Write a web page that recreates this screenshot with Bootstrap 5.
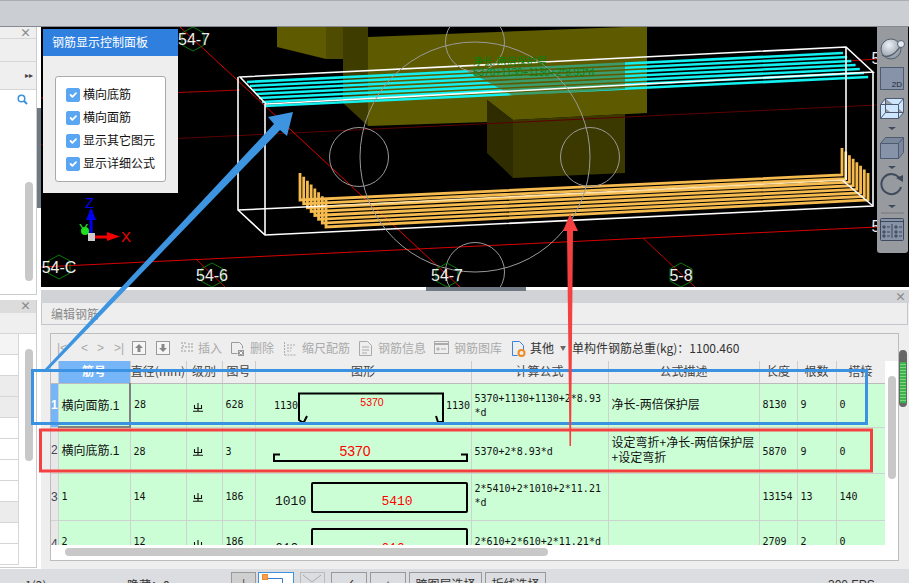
<!DOCTYPE html>
<html lang="zh">
<head>
<meta charset="UTF-8" />
<title>编辑钢筋</title>
<link href="https://cdn.jsdelivr.net/npm/bootstrap@5.3.0/dist/css/bootstrap.min.css" rel="stylesheet" />
<style>
  html, body { margin: 0; height: 583px; overflow: hidden; background: #fff; }
  body { font-family: "Noto Sans CJK SC", "Liberation Sans", sans-serif; font-size: 12px; line-height: 1.2; color: #222; }
  .app { width: 909px; height: 583px; position: relative; overflow: hidden; }
  .top-strip { height: 27px; background: #cbced3; border-top: 1px solid #aaadb2; border-bottom: 1px solid #85888c; }
  .main-area { height: 542px; }
  .side-col { width: 41px; background: #fff; flex: none; }
  .side-top { height: 268px; }
  .side-panel { width: 37px; border-right: 1px solid #ccc; border-bottom: 1px solid #ccc; background: #fff; position: relative; }
  .close-x { color: #888; font-size: 11px; line-height: 11px; font-weight: 700; text-align: right; padding-right: 5px; height: 11px; background: #efefef; }
  .side-row { background: #efefef; border-top: 1px solid #d6d6d6; color: #444; font-size: 8px; text-align: right; padding-right: 3px; }
  .side-row-search { background: #fff; padding-right: 8px; }
  .side-scroll { position: absolute; left: 25px; width: 8px; border-radius: 4px; background: #c8c8c8; }
  .side-split { width: 4px; }
  .side-split-band { margin-top: 81px; height: 100px; background: #6f7a85; }
  .side-low { height: 268px; margin-top: 5px; width: 37px; border-right: 1px solid #ccc; border-bottom: 1px solid #ccc; position: relative; overflow: hidden; }
  .side-low .close-x { height: 13px; background: #dcdcdc; }
  .low-sub { height: 21px; background: #efefef; border-bottom: 1px solid #d6d6d6; }
  .low-row { width: 19px; height: 21px; border-right: 1px solid #d6d6d6; border-bottom: 1px solid #d6d6d6; background: #fff; }
  .low-row-alt { background: #ececec; }
  .view-3d { height: 260px; background: #000; position: relative; overflow: hidden; }
  .view-3d > svg { display: block; }
  .ctrl-panel { position: absolute; left: 2px; top: 2px; width: 135px; height: 164px; background: #eee; }
  .ctrl-head { height: 27px; background: #2f80de; color: #fff; padding: 6px 9px; font-size: 12px; }
  .ctrl-box { margin: 20px 12px 0; height: 106px; background: #fff; border: 1px solid #aaa; border-radius: 3px; padding: 6px 10px; }
  .ctrl-item { height: 23px; gap: 3px; color: #111; }
  .ctrl-item .form-check-input { width: 14px; height: 14px; margin: 0; background-color: #5aa6f2; border-color: #5aa6f2; border-radius: 2px; flex: none; }
  .view-tools { position: absolute; right: 1px; top: 0; width: 31px; height: 226px; background: #979ba0; border-radius: 0 0 3px 3px; }
  .split-bar { height: 16px; position: relative; background: linear-gradient(#fff 0 3px, #d1d3d7 3px); }
  .split-bar .close-x { position: absolute; right: 3px; top: 4px; background: none; height: 11px; padding: 0; }
  .split-handle { position: absolute; left: 385px; top: 0; width: 100px; height: 4px; background: #6f7a85; }
  .edit-panel { height: 266px; background: #eee; padding-right: 1px; }
  .edit-title { height: 22px; border: 1px solid #c4c5cc; border-top: 0; padding: 4px 9px; color: #8a8a8a; }
  .edit-body { padding: 8px 0 0 9px; height: 244px; }
  .grid-box { width: 849px; height: 228px; border: 1px solid #bdbdbd; background: #fff; flex: none; }
  .grid-tools { height: 27px; background: #eee; padding-left: 6px; color: #aaa; white-space: nowrap; position: relative; }
  .grid-tools span, .grid-tools svg { position: absolute; top: 7px; }
  .grid-tools .on { color: #333; }
  .grid-main { height: 184px; }
  .grid-scroll { width: 834px; height: 184px; overflow: hidden; background: #eee; flex: none; }
  .rebar-grid { table-layout: fixed; width: 834px; margin: 0; }
  .table.rebar-grid > * > tr > * { padding: 2px 3px; background: #ccfed6; box-shadow: none; border: 0; border-right: 1px solid #cfd3cf; border-bottom: 1px solid #cfd3cf; vertical-align: top; color: #111; font-family: "DejaVu Sans Mono", "Noto Sans CJK SC", monospace; font-size: 10px; line-height: 14px; overflow: visible; word-break: break-all; }
  .table.rebar-grid > thead > tr > th { background: #eee; border-right-color: #ccc; border-bottom-color: #bbb; color: #444; height: 22px; text-align: center; font-family: "Noto Sans CJK SC", sans-serif; font-size: 12px; font-weight: 400; padding: 3px 0 0; white-space: nowrap; overflow: hidden; }
  .table.rebar-grid > thead > tr > th.col-sel { background: #76b5f7; color: #fff; font-weight: 700; }
  .table.rebar-grid > tbody > tr > td.num-cell { background: #e8e8e8; padding: 0; text-align: center; color: #445; font-family: "Liberation Sans", sans-serif; font-size: 12px; vertical-align: middle; }
  .table.rebar-grid > tbody > tr > td.num-sel { background: #76b5f7; color: #fff; font-weight: 700; }
  .table.rebar-grid > tbody > tr > td.name-cell { font-family: "Liberation Sans", "Noto Sans CJK SC", sans-serif; font-size: 12px; padding-top: 15px; }
  .table.rebar-grid > tbody > tr > td.name-low { padding-top: 16px; }
  .table.rebar-grid > tbody > tr > td.cur-cell { border-right: 2px solid #808080; border-bottom: 2px solid #808080; }
  .table.rebar-grid > tbody > tr > td.cn-cell { font-family: "Noto Sans CJK SC", sans-serif; font-size: 12px; line-height: 15px; padding-top: 6px; }
  .table.rebar-grid > tbody > tr > td.cn-one { padding-top: 12px; }
  .table.rebar-grid > tbody > tr > td.shape-cell { padding: 0; }
  .table.rebar-grid > tbody > tr > td.pad8 { padding-top: 8px; }
  .table.rebar-grid > tbody > tr > td.pad14 { padding-top: 14px; }
  .table.rebar-grid > tbody > tr > td.pad16 { padding-top: 16px; }
  .table.rebar-grid > tbody > tr > td.pad17 { padding-top: 17px; }
  .table.rebar-grid > tbody > tr > td.steel-cell { padding: 19px 0 0 6px; }
  .steel-ico { display: block; }
  .shape-cell svg { display: block; }
  .row-h1 { height: 44px; } .row-h2 { height: 46px; } .row-h3 { height: 47px; } .row-h4 { height: 47px; }
  .v-track { flex: 1; background: #fff; padding: 15px 0 0 3px; }
  .v-thumb { width: 8px; height: 103px; border-radius: 4px; background: #c8c8c8; }
  .h-track { height: 15px; background: #fff; padding: 3px 0 0 14px; }
  .h-thumb { width: 483px; height: 8px; border-radius: 4px; background: #c8c8c8; }
  .green-scroll { width: 8px; height: 57px; margin: 17px 0 0 0; border-radius: 4px; flex: none; background: repeating-linear-gradient(#3bb54a 0 2px, #7fd48a 2px 3px); border: 1px solid #666; border-top: 12px solid #666; border-bottom: 4px solid #666; }
  .status-bar { height: 14px; background: #dcdde0; overflow: hidden; position: relative; color: #333; }
  .status-bar span, .status-bar i { position: absolute; }
  .status-bar span { top: 9px; }
  .status-bar i { top: 3px; height: 22px; border: 1px solid #999; background: #dcdde0; font-style: normal; text-align: center; line-height: 16px; padding-top: 3px; }
  .status-bar i.on-btn { background: #fff; border-color: #3a92e0; padding: 0; }
  .status-bar i.dim-btn { border-color: #bbb; padding: 0; }
  .status-bar i.dark-btn { background: #cfcfcf; }
  .overlay-marks { position: absolute; left: 0; top: 0; pointer-events: none; }
</style>
</head>
<body>
<div class="app">
  <div class="top-strip"></div>
  <div class="d-flex main-area">
    <div class="side-col d-flex flex-column">
      <div class="d-flex side-top">
        <div class="side-panel">
          <div class="close-x">×</div>
          <div class="side-row" style="height:23px"></div>
          <div class="side-row pt-2" style="height:28px">▸▸</div>
          <div class="side-row side-row-search" style="height:19px">
            <svg width="11" height="11" viewBox="0 0 11 11" class="mt-1"><circle cx="4.5" cy="4.5" r="3.3" fill="none" stroke="#3a92d8" stroke-width="1.5"/><path d="M7 7l3 3" stroke="#3a92d8" stroke-width="2"/></svg>
          </div>
          <div class="side-scroll" style="top:155px;height:99px"></div>
        </div>
        <div class="side-split"><div class="side-split-band"></div></div>
      </div>
      <div class="side-low">
        <div class="close-x">×</div>
        <div class="low-sub"></div>
        <div class="low-row low-row-alt" style="background:#f4f4f4"></div>
        <div class="low-row"></div>
        <div class="low-row low-row-alt"></div>
        <div class="low-row low-row-alt"></div>
        <div class="low-row"></div>
        <div class="low-row"></div>
        <div class="low-row"></div>
        <div class="low-row"></div>
        <div class="low-row low-row-alt"></div>
        <div class="low-row"></div>
        <div class="low-row"></div>
        <div class="side-scroll" style="top:49px;height:112px"></div>
      </div>
    </div>

    <div class="flex-grow-1" style="min-width:0">
      <div class="view-3d">
        <svg id="scene" width="868" height="260" viewBox="41 27 868 260">
          <polygon points="277,27 277,47 326,59 343,59 343,27" fill="#5e5a00"/>
          <polygon points="326,27 326,59 343,59 343,27" fill="#4f4b00"/>
          <polygon points="343,27 368,27 368,126 343,103" fill="#3f3c00"/>
          <polygon points="368,37 625,27 647,27 647,113 513,120 487,100 487,122 368,126" fill="#5e5a00"/>
          <polygon points="487,100 513,120 513,178 487,153" fill="#2f2d00"/>
          <polygon points="513,120 625,114 625,173 513,178" fill="#3c3900"/>
          <line x1="41" y1="145" x2="877" y2="105" stroke="#5c0000"/>
          <line x1="41" y1="98" x2="240" y2="90" stroke="#b00000"/>
          <line x1="180" y1="27" x2="460" y2="287" stroke="#e00000"/>
          <line x1="41" y1="267" x2="877" y2="227" stroke="#d80000"/>
          <line x1="197" y1="260" x2="225" y2="287" stroke="#c00000"/>
          <line x1="643" y1="238" x2="695" y2="287" stroke="#c00000"/>
          <line x1="848" y1="61" x2="877" y2="59" stroke="#c00000"/>
          <g id="cyanBars"></g>
          <polygon points="466,70 513,96 625,89 625,61" fill="#5e5a00" fill-opacity=".55"/>
          <g id="orangeBars"></g>
          <g fill="none" stroke="#fff" stroke-width="1.6">
            <polygon points="240,77 846,47 873,72 266,104"/>
            <polyline points="238,77 238,210 265,235 873,206 873,72"/>
            <line x1="265" y1="104" x2="265" y2="235"/>
            <line x1="846" y1="47" x2="846" y2="180"/>
            <line x1="238" y1="210" x2="326" y2="206"/>
            <line x1="842" y1="180" x2="873" y2="206"/>
          </g>
          <line x1="326" y1="206" x2="846" y2="180" stroke="#ffe2a8" stroke-width="1.6"/>
          <g fill="none" stroke="#999">
            <circle cx="475" cy="157" r="115"/>
            <circle cx="475" cy="42" r="29.5"/>
            <circle cx="359" cy="157" r="29.5"/>
            <circle cx="590" cy="157" r="29.5"/>
            <circle cx="475" cy="272" r="29.5"/>
          </g>
          <g font-family="Noto Sans CJK SC, sans-serif" font-size="10" fill="#0d800d">
            <text x="473" y="65">净长-两倍保护层</text>
            <text x="473" y="76" font-family="Liberation Sans, sans-serif">5370+1130+1130+2*8.93*d</text>
          </g>
          <g fill="none" stroke="#0a7a0a">
            <polygon points="193,27 204,33 204,45 193,51 182,45 182,33"/>
            <polygon points="59,255 70,261 70,273 59,279 48,273 48,261"/>
            <polygon points="212,263 223,269 223,281 212,287 201,281 201,269"/>
            <polygon points="447,263 458,269 458,281 447,287 436,281 436,269"/>
            <polygon points="681,263 692,269 692,281 681,287 670,281 670,269"/>
          </g>
          <g font-family="Liberation Sans, sans-serif" font-size="16" fill="#eee" text-anchor="middle">
            <text x="194" y="45">54-7</text>
            <text x="59" y="273">54-C</text>
            <text x="212" y="281">54-6</text>
            <text x="447" y="281">54-7</text>
            <text x="681" y="281">5-8</text>
            <text x="876" y="64">5</text>
            <text x="876" y="232">5</text>
          </g>
          <g>
            <circle cx="85" cy="231" r="4" fill="#1fe01f"/>
            <text x="79" y="234" font-family="Liberation Sans, sans-serif" font-size="14" fill="#1fe01f">Y</text>
            <rect x="89.5" y="210" width="3" height="24" fill="#0000f0"/>
            <polygon points="91,208 86,220 96,220" fill="#0000f0"/>
            <text x="85" y="208" font-family="Liberation Sans, sans-serif" font-size="15" fill="#0000f0">Z</text>
            <rect x="93" y="235.5" width="16" height="3" fill="#f00000"/>
            <polygon points="120,236.5 107,232 107,241" fill="#f00000"/>
            <text x="121" y="242" font-family="Liberation Sans, sans-serif" font-size="15" fill="#f00000">X</text>
            <rect x="88" y="233" width="7" height="8" fill="#ccc"/>
          </g>
        </svg>

        <div class="ctrl-panel">
          <div class="ctrl-head">钢筋显示控制面板</div>
          <div class="ctrl-box">
            <label class="d-flex align-items-center ctrl-item"><input class="form-check-input" type="checkbox" checked /> 横向底筋</label>
            <label class="d-flex align-items-center ctrl-item"><input class="form-check-input" type="checkbox" checked /> 横向面筋</label>
            <label class="d-flex align-items-center ctrl-item"><input class="form-check-input" type="checkbox" checked /> 显示其它图元</label>
            <label class="d-flex align-items-center ctrl-item"><input class="form-check-input" type="checkbox" checked /> 显示详细公式</label>
          </div>
        </div>

        <div class="view-tools">
          <svg width="31" height="226" viewBox="0 0 31 226">
            <defs>
              <radialGradient id="ballFill" cx=".4" cy=".3" r=".8"><stop offset="0" stop-color="#eef2f6"/><stop offset="1" stop-color="#7f8b99"/></radialGradient>
            </defs>
            <circle cx="14" cy="22" r="10" fill="url(#ballFill)" stroke="#56606d"/>
            <path d="M5 28c6 4 14-1 19-10" fill="none" stroke="#56606d" stroke-width="1.5"/>
            <circle cx="24" cy="17" r="3.5" fill="#e1e8ef" stroke="#56606d"/>
            <rect x="3.5" y="40.5" width="23" height="22" fill="#8693a8" stroke="#4d5a70"/>
            <text x="25" y="60" text-anchor="end" font-family="Liberation Sans, sans-serif" font-size="8" fill="#1c2430">2D</text>
            <path d="M3.500 77.500h18v14h-18zM3.500 77.500l5-6h18v14l-5 6M21.500 77.500l5-6M8.500 71.500v14h18M3.500 91.500l5-6" fill="#cfe6ff" stroke="#4d5a70"/>
            <path d="M3.500 116.500h18v15h-18z" fill="#8693a8" stroke="#4d5a70"/>
            <path d="M3.500 116.500l5-6h18v15l-5 6v-15zM21.500 116.500l5-6" fill="#7b889c" stroke="#4d5a70"/>
            <path d="M23 152a10 10 0 1 0 1 8" fill="none" stroke="#3f4a5c" stroke-width="2"/>
            <path d="M19 151l7-3v7z" fill="#3f4a5c"/>
            <g fill="#3f4a5c"><path d="M11 100h8l-4 3zM11 139h8l-4 3zM11 178h8l-4 3z"/></g>
            <line x1="4" y1="186" x2="27" y2="186" stroke="#777"/>
            <rect x="3.500" y="191.500" width="23" height="22" rx="1" fill="#8693a8" stroke="#3f4a5c"/>
            <path d="M3.500 194.500h23M15 197v14M6 199h2v2h-2zM6 204h2v2h-2zM6 208h2v2h-2zM18 199h2v2h-2zM18 204h2v2h-2zM18 208h2v2h-2zM10 200h3M10 205h3M10 209h3M22 200h3M22 205h3M22 209h3" fill="none" stroke="#2a3442" stroke-width=".8"/>
          </svg>
        </div>
      </div>

      <div class="split-bar">
        <div class="split-handle"></div>
        <div class="close-x">×</div>
      </div>

      <div class="edit-panel">
        <div class="edit-title">编辑钢筋</div>
        <div class="d-flex edit-body">
          <div class="grid-box">
            <div class="grid-tools">
              <span style="left:6px;font-family:'Liberation Sans'">|&lt;</span>
              <span style="left:30px;font-family:'Liberation Sans'">&lt;</span>
              <span style="left:46px;font-family:'Liberation Sans'">&gt;</span>
              <span style="left:63px;font-family:'Liberation Sans'">&gt;|</span>
              <svg style="left:81px" width="14" height="14" viewBox="0 0 14 14"><rect x=".5" y=".5" width="13" height="13" fill="#f6f6f6" stroke="#999"/><path d="M7 3l4 4H8.500v4h-3V7H3z" fill="#888"/></svg>
              <svg style="left:105px" width="14" height="14" viewBox="0 0 14 14"><rect x=".5" y=".5" width="13" height="13" fill="#f6f6f6" stroke="#999"/><path d="M7 11L3 7h2.500V3h3v4H11z" fill="#888"/></svg>
              <svg style="left:129px" width="14" height="14" viewBox="0 0 14 14"><path d="M1 2h5M5 6h8M1 10h5M8 3h5v1M8 10h5v1M3 4v3M3 7H1" fill="none" stroke="#999" stroke-dasharray="2 1"/></svg>
              <span style="left:147px">插入</span>
              <svg style="left:179px" width="14" height="15" viewBox="0 0 14 15"><path d="M1.500 1.500h8l3 3v3M1.500 1.500v11h6" fill="none" stroke="#999"/><rect x="8" y="9" width="6" height="6" fill="#999"/><path d="M9.500 10.500l3 3m0-3l-3 3" stroke="#fff"/></svg>
              <span style="left:199px">删除</span>
              <svg style="left:233px" width="12" height="15" viewBox="0 0 12 15"><path d="M.5 1v13M.5 14h11M3 4h8M3 7h6M3 10h4" fill="none" stroke="#aaa" stroke-dasharray="2 1"/></svg>
              <span style="left:251px">缩尺配筋</span>
              <svg style="left:308px" width="13" height="15" viewBox="0 0 13 15"><path d="M.5.5h8l4 4v10H.5zM3 6h7M3 9h7M3 12h5" fill="none" stroke="#aaa"/></svg>
              <span style="left:327px">钢筋信息</span>
              <svg style="left:383px" width="15" height="13" viewBox="0 0 15 13"><rect x=".5" y=".5" width="14" height="12" fill="none" stroke="#aaa"/><path d="M1 3h13" stroke="#aaa" stroke-width="2"/><path d="M3 7h2v2H3zM7 8h5" fill="none" stroke="#aaa"/></svg>
              <span style="left:403px">钢筋图库</span>
              <svg style="left:460px" width="16" height="17" viewBox="0 0 16 17"><path d="M1.500.5h7l4 4v5M1.500.5v14h5" fill="none" stroke="#3b82d8"/><circle cx="10.500" cy="12" r="3" fill="none" stroke="#f08a24" stroke-width="2"/></svg>
              <span class="on" style="left:479px">其他</span>
              <span style="left:509px;top:10px;color:#666;font-size:6px">▼</span>
              <span class="on" style="left:521px">单构件钢筋总重(kg)：1100.460</span>
            </div>
            <div class="d-flex grid-main">
              <div class="grid-scroll">
                <table class="table rebar-grid">
                  <colgroup>
                    <col style="width:7px"/><col style="width:72px"/><col style="width:56px"/><col style="width:36px"/><col style="width:33px"/><col style="width:216px"/><col style="width:137px"/><col style="width:151px"/><col style="width:38px"/><col style="width:39px"/><col style="width:49px"/>
                  </colgroup>
                  <thead>
                    <tr>
                      <th></th><th class="col-sel">筋号</th><th>直径(mm)</th><th>级别</th><th>图号</th><th>图形</th><th>计算公式</th><th>公式描述</th><th>长度</th><th>根数</th><th>搭接</th>
                    </tr>
                  </thead>
                  <tbody>
                    <tr class="row-h1">
                      <td class="num-cell num-sel">1</td>
                      <td class="name-cell cur-cell">横向面筋.1</td>
                      <td class="pad14">28</td>
                      <td class="steel-cell"><svg class="steel-ico" width="10" height="9" viewBox="0 0 10 9"><use href="#steelMark"/></svg></td>
                      <td class="pad14">628</td>
                      <td class="shape-cell">
                        <svg width="215" height="43" viewBox="255 383 215 43">
                          <text x="273" y="408" font-family="DejaVu Sans Mono, monospace" font-size="10" fill="#111">1130</text>
                          <text x="445" y="408" font-family="DejaVu Sans Mono, monospace" font-size="10" fill="#111">1130</text>
                          <path d="M306 415l-3 6h-2l-3-2V392.500H442V421h-5l-2-6" fill="none" stroke="#000" stroke-width="2"/>
                          <text x="371" y="405" text-anchor="middle" font-family="Liberation Sans, sans-serif" font-size="10.500" fill="#f00">5370</text>
                        </svg>
                      </td>
                      <td class="pad8">5370+1130+1130+2*8.93*d</td>
                      <td class="cn-cell cn-one">净长-两倍保护层</td>
                      <td class="pad14">8130</td><td class="pad14">9</td><td class="pad14">0</td>
                    </tr>
                    <tr class="row-h2">
                      <td class="num-cell">2</td>
                      <td class="name-cell name-low">横向底筋.1</td>
                      <td class="pad17">28</td>
                      <td class="steel-cell"><svg class="steel-ico" width="10" height="9" viewBox="0 0 10 9"><use href="#steelMark"/></svg></td>
                      <td class="pad17">3</td>
                      <td class="shape-cell">
                        <svg width="215" height="45" viewBox="255 428 215 45">
                          <path d="M279 454.500h-6V461H466V454.500h-6" fill="none" stroke="#000" stroke-width="2"/>
                          <text x="354" y="456" text-anchor="middle" font-family="Liberation Sans, sans-serif" font-size="14" fill="#f00">5370</text>
                        </svg>
                      </td>
                      <td class="pad17">5370+2*8.93*d</td>
                      <td class="cn-cell">设定弯折+净长-两倍保护层+设定弯折</td>
                      <td class="pad17">5870</td><td class="pad17">9</td><td class="pad17">0</td>
                    </tr>
                    <tr class="row-h3">
                      <td class="num-cell">3</td>
                      <td class="pad16">1</td>
                      <td class="pad16">14</td>
                      <td class="steel-cell"><svg class="steel-ico" width="10" height="9" viewBox="0 0 10 9"><use href="#steelMark"/></svg></td>
                      <td class="pad16">186</td>
                      <td class="shape-cell">
                        <svg width="215" height="46" viewBox="255 474 215 46">
                          <text x="274" y="505" font-family="Liberation Mono, monospace" font-size="13" fill="#111">1010</text>
                          <rect x="311" y="483" width="155" height="29" fill="none" stroke="#000" stroke-width="2" rx="1"/>
                          <text x="396" y="505" text-anchor="middle" font-family="Liberation Mono, monospace" font-size="13" fill="#f00">5410</text>
                        </svg>
                      </td>
                      <td class="pad8">2*5410+2*1010+2*11.21*d</td>
                      <td></td>
                      <td class="pad16">13154</td><td class="pad16">13</td><td class="pad16">140</td>
                    </tr>
                    <tr class="row-h4">
                      <td class="num-cell" style="vertical-align:top;padding-top:16px">4</td>
                      <td class="pad14">2</td>
                      <td class="pad14">12</td>
                      <td class="steel-cell"><svg class="steel-ico" width="10" height="9" viewBox="0 0 10 9"><use href="#steelMark"/></svg></td>
                      <td class="pad14">186</td>
                      <td class="shape-cell">
                        <svg width="215" height="46" viewBox="255 521 215 46">
                          <text x="274" y="552" font-family="Liberation Mono, monospace" font-size="13" fill="#111">610</text>
                          <rect x="311" y="529" width="155" height="29" fill="none" stroke="#000" stroke-width="2" rx="1"/>
                          <text x="392" y="552" text-anchor="middle" font-family="Liberation Mono, monospace" font-size="13" fill="#f00">610</text>
                        </svg>
                      </td>
                      <td class="pad14">2*610+2*610+2*11.21*d</td>
                      <td></td>
                      <td class="pad14">2709</td><td class="pad14">2</td><td class="pad14">0</td>
                    </tr>
                  </tbody>
                </table>
              </div>
              <div class="v-track"><div class="v-thumb"></div></div>
            </div>
            <div class="h-track"><div class="h-thumb"></div></div>
          </div>
          <div class="green-scroll"></div>
        </div>
      </div>
    </div>
  </div>
  <div class="status-bar">
    <span style="left:25px">1(2)</span>
    <span style="left:127px">隐藏：0</span>
    <i class="dark-btn" style="left:231px;width:25px">|</i>
    <i class="on-btn" style="left:258px;width:36px">
      <svg width="34" height="12" viewBox="0 0 34 12" class="d-block"><path d="M8.500 5.500h15v8" fill="none" stroke="#3a7bd0"/><rect x="3.500" y="1.500" width="5" height="5" fill="#f7a04e" stroke="#e98a30"/></svg>
    </i>
    <i class="dim-btn" style="left:300px;width:25px">
      <svg width="23" height="10" viewBox="0 0 23 10" class="d-block"><path d="M2 2l9 7 9-7" fill="none" stroke="#aaa"/></svg>
    </i>
    <i style="left:331px;width:36px">✓</i>
    <i style="left:370px;width:36px">+</i>
    <i style="left:409px;width:73px">跨图层选择</i>
    <i style="left:485px;width:61px">折线选择</i>
    <span style="left:828px;font-family:'Liberation Sans'">300 FPS</span>
  </div>

  <svg class="overlay-marks" width="909" height="583" viewBox="0 0 909 583">
    <defs><path id="steelMark" d="M5 0v8M1.500 2v3.500h7V2M0 8.300h10" fill="none" stroke="#111" stroke-width="1.100"/></defs>
    <rect x="32.500" y="370.500" width="834" height="53" fill="none" stroke="#3a92e0" stroke-width="3"/>
    <rect x="40.500" y="430" width="831" height="41" fill="none" stroke="#f44040" stroke-width="3"/>
    <polygon points="45,369 274,124 268,117 293,112 287,136 280,130 47,371" fill="#3d94e0"/>
    <polygon points="570,214 578,231 573,231 571,446 569.500,446 567,231 563,231" fill="#f44040"/>
  </svg>
</div>
<script src="https://cdn.jsdelivr.net/npm/bootstrap@5.3.0/dist/js/bootstrap.bundle.min.js"></script>
<script>
  // rebar bars in the 3D view
  const NS = "http://www.w3.org/2000/svg";
  const cyan = document.getElementById("cyanBars");
  for (let i = 0; i < 7; i++) {
    const l = document.createElementNS(NS, "line");
    l.setAttribute("x1", 247 + 3 * i);
    l.setAttribute("y1", 82 + 4 * i);
    l.setAttribute("x2", 843 + 4.2 * i);
    l.setAttribute("y2", 53 + 4 * i);
    l.setAttribute("stroke", "#12f0f0");
    l.setAttribute("stroke-width", "2.6");
    cyan.appendChild(l);
  }
  const orange = document.getElementById("orangeBars");
  for (let i = 0; i < 8; i++) {
    const t = i / 7;
    const x1 = 300 + 26 * t, y1 = 200 + 27 * t, x2 = 842 + 26 * t, y2 = 175 + 25 * t;
    const p = document.createElementNS(NS, "polyline");
    p.setAttribute("points", `${x1},${y1 - 27} ${x1},${y1} ${x2},${y2} ${x2},${y2 - 27}`);
    p.setAttribute("fill", "none");
    p.setAttribute("stroke", "#f6bb4f");
    p.setAttribute("stroke-width", "2.8");
    orange.appendChild(p);
  }
</script>
</body>
</html>
